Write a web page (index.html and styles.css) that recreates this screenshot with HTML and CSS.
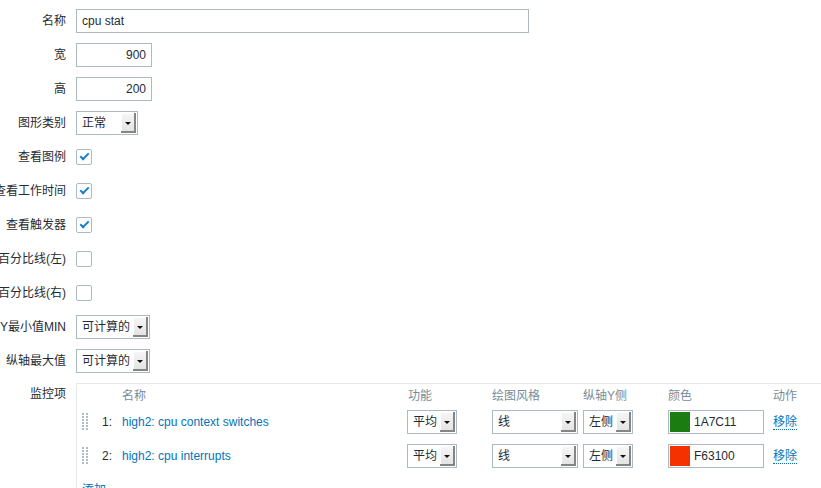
FILE: index.html
```html
<!DOCTYPE html>
<html lang="zh-CN">
<head>
<meta charset="utf-8">
<title>图形</title>
<link rel="stylesheet" href="styles.css">
</head>
<body>
<form class="form">
  <div class="row">
    <label class="lbl">名称</label>
    <div class="field"><div class="input wide">cpu stat</div></div>
  </div>
  <div class="row">
    <label class="lbl">宽</label>
    <div class="field"><div class="input num">900</div></div>
  </div>
  <div class="row">
    <label class="lbl">高</label>
    <div class="field"><div class="input num">200</div></div>
  </div>
  <div class="row">
    <label class="lbl">图形类别</label>
    <div class="field"><div class="select s-type"><span class="sv">正常</span><span class="sb"></span></div></div>
  </div>
  <div class="row">
    <label class="lbl">查看图例</label>
    <div class="field"><span class="cb checked"></span></div>
  </div>
  <div class="row">
    <label class="lbl">查看工作时间</label>
    <div class="field"><span class="cb checked"></span></div>
  </div>
  <div class="row">
    <label class="lbl">查看触发器</label>
    <div class="field"><span class="cb checked"></span></div>
  </div>
  <div class="row">
    <label class="lbl">百分比线(左)</label>
    <div class="field"><span class="cb"></span></div>
  </div>
  <div class="row">
    <label class="lbl">百分比线(右)</label>
    <div class="field"><span class="cb"></span></div>
  </div>
  <div class="row">
    <label class="lbl">纵轴Y最小值MIN</label>
    <div class="field"><div class="select s-calc"><span class="sv">可计算的</span><span class="sb"></span></div></div>
  </div>
  <div class="row">
    <label class="lbl">纵轴最大值</label>
    <div class="field"><div class="select s-calc"><span class="sv">可计算的</span><span class="sb"></span></div></div>
  </div>
  <div class="row top">
    <label class="lbl lbl-top">监控项</label>
    <div class="field">
      <div class="items">
        <div class="grid head">
          <span></span><span></span>
          <span>名称</span>
          <span class="h-fn">功能</span>
          <span>绘图风格</span>
          <span>纵轴Y侧</span>
          <span>颜色</span>
          <span>动作</span>
        </div>
        <div class="grid item">
          <span class="drag"></span>
          <span class="no">1:</span>
          <a class="link">high2: cpu context switches</a>
          <div class="select s-fn"><span class="sv">平均</span><span class="sb"></span></div>
          <div class="select s-style"><span class="sv">线</span><span class="sb"></span></div>
          <div class="select s-fn"><span class="sv">左侧</span><span class="sb"></span></div>
          <div class="color"><span class="swatch sw-green"></span><span>1A7C11</span></div>
          <a class="remove">移除</a>
        </div>
        <div class="grid item">
          <span class="drag"></span>
          <span class="no">2:</span>
          <a class="link">high2: cpu interrupts</a>
          <div class="select s-fn"><span class="sv">平均</span><span class="sb"></span></div>
          <div class="select s-style"><span class="sv">线</span><span class="sb"></span></div>
          <div class="select s-fn"><span class="sv">左侧</span><span class="sb"></span></div>
          <div class="color"><span class="swatch sw-red"></span><span>F63100</span></div>
          <a class="remove">移除</a>
        </div>
        <div class="add-row"><a class="link">添加</a></div>
      </div>
    </div>
  </div>
</form>
</body>
</html>
```

FILE: styles.css
```css
html, body {
  margin: 0;
  padding: 0;
  overflow: hidden;
  background: #ffffff;
}
body {
  font-family: "Liberation Sans", Arial, "Noto Sans CJK SC", sans-serif;
  font-size: 12px;
  color: #1f2c33;
  line-height: 14px;
}
.form {
  display: flex;
  flex-direction: column;
  gap: 10px;
  padding-top: 9px;
}
.row {
  display: flex;
  align-items: center;
  gap: 10px;
  height: 24px;
}
.row.top {
  align-items: flex-start;
  height: auto;
}
.lbl {
  width: 66px;
  flex: none;
  display: flex;
  justify-content: flex-end;
  white-space: nowrap;
}
.lbl-top {
  padding-top: 4px;
}
.field {
  display: flex;
  align-items: center;
}
.input {
  box-sizing: border-box;
  height: 24px;
  border: 1px solid #acbbc2;
  background: #fff;
  padding: 0 5px;
  line-height: 22px;
  white-space: nowrap;
}
.input.wide { width: 453px; }
.input.num { width: 76px; text-align: right; }

.select {
  box-sizing: border-box;
  height: 24px;
  border: 1px solid #acbbc2;
  background: #fff;
  display: flex;
  align-items: stretch;
  padding: 1px;
}
.select .sv {
  flex: 1;
  padding-left: 4px;
  line-height: 20px;
  white-space: nowrap;
  overflow: hidden;
}
.select .sb {
  width: 15px;
  flex: none;
  position: relative;
  background: linear-gradient(#f6f6f6, #e2e2e2);
  box-shadow: inset -2px -2px 0 #858585, inset 1px 1px 0 #ffffff;
}
.select .sb::after {
  content: "";
  position: absolute;
  left: 4px;
  top: 9px;
  border-left: 3px solid transparent;
  border-right: 3px solid transparent;
  border-top: 3px solid #111;
}
.s-type { width: 62px; }
.s-calc { width: 74px; }
.s-fn { width: 50px; }
.s-style { width: 86px; }

.cb {
  box-sizing: border-box;
  width: 16px;
  height: 16px;
  border: 1px solid #acbbc2;
  border-radius: 2px;
  background: #fff;
  position: relative;
}
.cb.checked::after {
  content: "";
  position: absolute;
  box-sizing: border-box;
  left: 3px;
  top: 3px;
  width: 9px;
  height: 5px;
  border-left: 2px solid #1a7fc6;
  border-bottom: 2px solid #1a7fc6;
  transform: rotate(-45deg);
}

.items {
  width: 800px;
  border-top: 1px solid #e6e9eb;
  border-left: 1px solid #e6e9eb;
  padding: 5px 0 10px 5px;
  display: flex;
  flex-direction: column;
}
.grid {
  display: grid;
  grid-template-columns: 20px 20px 285px 85px 91px 85px 105px 60px;
  align-items: center;
}
.head {
  color: #768d99;
  height: 14px;
}
.h-fn { padding-left: 1px; }
.item {
  height: 24px;
  margin-top: 10px;
}
.head + .item { margin-top: 7px; }
.drag {
  width: 6px;
  height: 18px;
  background-image: radial-gradient(circle at 1px 1px, #b0bdc4 1px, transparent 1.1px);
  background-size: 4px 3px;
}
.no { white-space: nowrap; }
.link {
  color: #0275b8;
  white-space: nowrap;
  text-decoration: none;
}
.color {
  box-sizing: border-box;
  width: 96px;
  height: 24px;
  border: 1px solid #acbbc2;
  display: flex;
  align-items: center;
  gap: 4px;
  padding: 1px;
}
.swatch {
  width: 20px;
  height: 20px;
  flex: none;
}
.sw-green { background: #1a7c11; }
.sw-red { background: #f63100; }
.remove {
  color: #0275b8;
  justify-self: start;
  border-bottom: 1px dotted #0275b8;
  line-height: 13px;
  margin-top: 2px;
}
.add-row {
  height: 24px;
  display: flex;
  align-items: center;
  margin-top: 10px;
}
```
